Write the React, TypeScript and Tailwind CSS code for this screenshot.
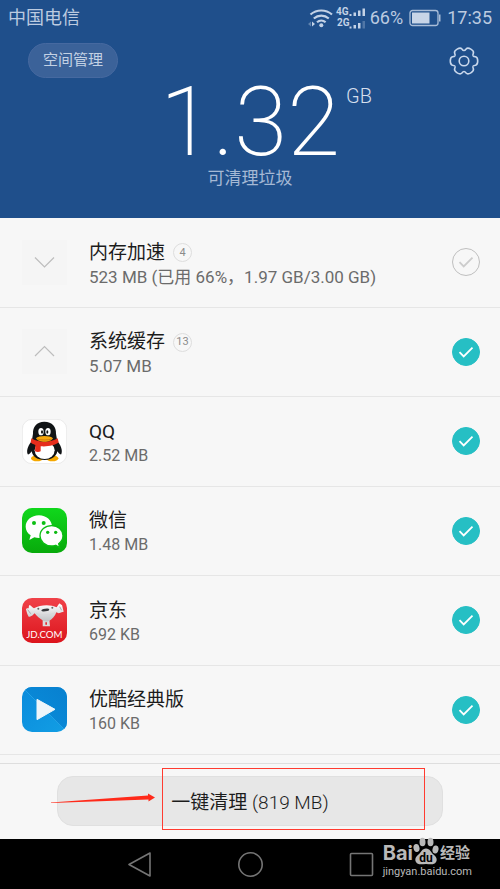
import { useState } from "react";
import type { ReactNode } from "react";

type JunkItem = {
  id: string;
  title: string;
  detail: string;
  icon: ReactNode;
  count?: number;
  checked: boolean;
};

const QQIcon = () => (
  <svg viewBox="0 0 135 135" className="size-full">
    <rect x="1" y="1" width="133" height="133" rx="29" fill="#fff" stroke="#e2e2e2" strokeWidth="2" />
    <ellipse cx="45" cy="118" rx="18" ry="9" fill="#f5a800" />
    <ellipse cx="91" cy="118" rx="18" ry="9" fill="#f5a800" />
    <path d="M32 64C20 76 12 93 17 106c5 1 9-4 12-9 3 17 18 26 39 26s35-10 38-26c3 5 7 10 12 9 5-13-2-28-14-42z" fill="#111416" />
    <ellipse cx="68" cy="94" rx="30" ry="26" fill="#fff" />
    <path d="M67 8C44 8 32 24 33 44l-3 18c18 15 58 15 75 0l-3-18C103 24 91 8 67 8z" fill="#111416" />
    <ellipse cx="57" cy="38" rx="8" ry="11" fill="#fff" />
    <ellipse cx="78" cy="38" rx="8" ry="11" fill="#fff" />
    <ellipse cx="60" cy="39" rx="3" ry="5" fill="#111" />
    <ellipse cx="76" cy="39" rx="3" ry="5" fill="#111" />
    <path d="M28 58c20 14 58 14 79 0l3 12c-10 9-34 14-54 12v15c-5 3-12 3-17 0l1-19c-7-2-12-5-14-8z" fill="#e62d1c" />
    <path d="M42 58c8-9 43-9 51 0-7 14-44 14-51 0z" fill="#f9a90d" />
    <path d="M46 60c12 4 32 4 43 0" stroke="#b96508" strokeWidth="2" fill="none" />
  </svg>
);

const WeChatIcon = () => (
  <svg viewBox="0 0 135 135" className="size-full">
    <defs>
      <linearGradient id="wechat-bg" x1="0" y1="0" x2="0" y2="1">
        <stop offset="0" stopColor="#10d71c" />
        <stop offset="1" stopColor="#08aa0b" />
      </linearGradient>
    </defs>
    <rect width="135" height="135" rx="30" fill="url(#wechat-bg)" />
    <path d="M51 22c-23 0-40 15-40 34 0 11 6 20 15 26l-4 14 15-8c5 1 9 2 14 2 22 0 39-15 39-34S73 22 51 22z" fill="#fff" />
    <circle cx="36" cy="45" r="6" fill="#0cc014" />
    <circle cx="65" cy="45" r="6" fill="#0cc014" />
    <path d="M89 53c-20 0-35 13-35 30s15 31 35 31c4 0 8-1 12-2l12 7-3-12c8-6 13-14 13-24 0-17-15-30-34-30z" fill="#fff" stroke="#0bbd12" strokeWidth="4" />
    <circle cx="77" cy="73" r="5" fill="#0cb912" />
    <circle cx="101" cy="73" r="5" fill="#0cb912" />
  </svg>
);

const JDIcon = () => (
  <svg viewBox="0 0 135 135" className="size-full">
    <defs>
      <linearGradient id="jd-bg" x1="0" y1="0" x2="0" y2="1">
        <stop offset="0" stopColor="#f04249" />
        <stop offset="1" stopColor="#dc141c" />
      </linearGradient>
      <linearGradient id="jd-dog" x1="0" y1="0" x2="0" y2="1">
        <stop offset="0" stopColor="#fff" />
        <stop offset="1" stopColor="#bfc2c4" />
      </linearGradient>
    </defs>
    <rect width="135" height="135" rx="30" fill="url(#jd-bg)" />
    <path d="M62 64h20l2 21H62z" fill="#d9dcdd" />
    <path
      d="M36 31c18-11 50-12 68-3l7-11c4-1 5 4 9 4l5 20c-4 2-8 0-11 4-5 1-8 0-11-2-4 12-12 20-21 25-6 3-13 3-18 0C53 62 44 54 38 46c-4 2-5 8-10 8-3 0-4 4-8 2-4-6-6-14-8-22 2-5 6-3 8-3l1-9c5-2 9 6 15 9z"
      fill="url(#jd-dog)"
    />
    <path d="M17 35l9 12M113 26l6 11" stroke="#a8abad" strokeWidth="3" fill="none" />
    <path d="M42 46c16 7 42 7 58-3" stroke="#d3d6d8" strokeWidth="2" fill="none" />
    <ellipse cx="70" cy="36" rx="12" ry="4" fill="#34383b" transform="rotate(-8 70 36)" />
    <circle cx="49" cy="32" r="3" fill="#666" />
    <circle cx="91" cy="29" r="3" fill="#666" />
    <path d="M70 73h5v7h-5z" fill="#e42c33" />
    <text x="67" y="119" textAnchor="middle" fontSize="29" fontFamily="Lato, sans-serif" fill="#fff">
      JD.COM
    </text>
  </svg>
);

const YoukuIcon = () => (
  <svg viewBox="0 0 135 135" className="size-full">
    <defs>
      <linearGradient id="youku-top" x1="0" y1="1" x2="1" y2="0">
        <stop offset="0" stopColor="#0a8fdd" />
        <stop offset="1" stopColor="#0880cf" />
      </linearGradient>
      <linearGradient id="youku-low" x1="0" y1="0" x2="1" y2="1">
        <stop offset="0" stopColor="#0a8bdc" />
        <stop offset="1" stopColor="#129ee4" />
      </linearGradient>
      <clipPath id="youku-clip">
        <rect width="135" height="135" rx="30" />
      </clipPath>
    </defs>
    <g clipPath="url(#youku-clip)">
      <rect width="135" height="135" fill="url(#youku-low)" />
      <path d="M0 0h135v135z" fill="url(#youku-top)" />
      <path d="M8 8l119 119" stroke="#2fabea" strokeWidth="2" />
    </g>
    <path d="M45 37v61l54-31z" fill="#eef6fa" stroke="#eef6fa" strokeWidth="3" strokeLinejoin="round" />
  </svg>
);

const Chevron = ({ up }: { up?: boolean }) => (
  <svg viewBox="0 0 45 45" className="size-full" fill="none" stroke="#bdbdbd" strokeWidth="1.2">
    <path d={up ? "M13 27l9.5-9.5 9.5 9.5" : "M13 17.5l9.5 9.5 9.5-9.5"} />
  </svg>
);

const lobes = [0, 60, 120, 180, 240, 300];

const GearIcon = () => (
  <svg viewBox="-15 -15 30 30" className="size-[30px]" fill="none" stroke="#c9d8ec" strokeWidth="1.6">
    {lobes.map((angle) => (
      <path
        key={angle}
        transform={`rotate(${angle})`}
        d="M9.1-5.25C9.6-4.4 10.5-4.3 11.5-4.2C12.9-3.9 13.7-1.6 13.7 0C13.7 1.6 12.9 3.9 11.5 4.2C10.5 4.3 9.6 4.4 9.1 5.25"
      />
    ))}
    <circle r="4.8" />
  </svg>
);

const StatusBar = () => (
  <div className="flex h-9 items-center justify-between px-2 text-lg text-[#bccbe0]">
    <span>中国电信</span>
    <div className="flex items-center">
      <svg viewBox="0 0 60 26" className="mr-[3px] h-[26px] w-[60px]" fill="#c3d2e6">
        <g fill="none" stroke="#c3d2e6" strokeWidth="2.2">
          <path d="M3.5 9.5a16.5 16.5 0 0 1 21.5 0" />
          <path d="M6.8 13.5a11.5 11.5 0 0 1 15 0" />
          <path d="M10 17.3a6.5 6.5 0 0 1 8.6 0" />
        </g>
        <circle cx="14.3" cy="20.3" r="2" />
        <path d="M5 16.5v5l3-2.5z" />
        <path d="M4 16.5v5l-3-2.5z" opacity=".4" />
        <text x="29" y="10" fontSize="10" fontWeight="700">4G</text>
        <text x="30" y="21" fontSize="10" fontWeight="700">2G</text>
        <path d="M42.5 9h2v2h-2zM46.5 7.5H49V11h-2.5zM51 5.5h2.5V11H51zM55.5 3.5H58V11h-2.5z" />
        <path d="M42.5 21.5h2v2h-2zM46.5 20H49v3.5h-2.5zM51 18h2.5v5.5H51z" />
        <path d="M55.5 16H58v7.5h-2.5z" opacity=".3" />
      </svg>
      <span>66%</span>
      <svg viewBox="0 0 32 18" className="mx-[6px] h-[18px] w-8">
        <rect x="1" y="1.5" width="28" height="15" rx="2.5" fill="none" stroke="#a9bdd8" strokeWidth="1.3" />
        <rect x="3" y="3.5" width="17.5" height="11" fill="#c8d5e7" />
        <path d="M30 5.5h1.5v7H30z" fill="#a9bdd8" />
      </svg>
      <span>17:35</span>
    </div>
  </div>
);

type RowProps = {
  item: JunkItem;
  onToggle: (id: string) => void;
};

const JunkRow = ({ item, onToggle }: RowProps) => {
  const { id, title, detail, icon, count, checked } = item;
  return (
    <li className="flex items-center border-b border-[#e6e6e6] pr-5 pl-[22px]">
      {count ? (
        <button type="button" aria-label={title} className="size-[45px] bg-[#f5f5f5]">
          {icon}
        </button>
      ) : (
        <div className="size-[45px]">{icon}</div>
      )}
      <div className="ml-[22px] flex-1 pt-[5px]">
        <div className="flex items-center gap-2">
          <label htmlFor={id} className="text-[19px] leading-6 text-[#1c1c1c]">
            {title}
          </label>
          {count && (
            <span className="flex size-[19px] items-center justify-center rounded-full border border-[#dedede] text-[11px] text-[#8b8b8b]">
              {count}
            </span>
          )}
        </div>
        <p className={`${count ? "text-[17px]" : "text-base"} leading-6 text-[#6b6b6b]`}>{detail}</p>
      </div>
      <div className="relative size-7">
        <input
          id={id}
          type="checkbox"
          checked={checked}
          onChange={() => onToggle(id)}
          className="peer block size-7 appearance-none rounded-full border border-[#bfbfbf] checked:border-[#26bfc4] checked:bg-[#26bfc4]"
        />
        <svg
          viewBox="0 0 28 28"
          className="pointer-events-none absolute inset-0 size-7 text-[#cccccc] peer-checked:text-white"
          fill="none"
          stroke="currentColor"
          strokeWidth="1.8"
        >
          <path d="M7.5 14.2l4.2 4.3L20.5 9.7" />
        </svg>
      </div>
    </li>
  );
};

const Watermark = () => (
  <div className="absolute right-7 bottom-[10px] text-[#b9b9b9]">
    <div className="flex items-end">
      <span className="font-[Inter] text-xl leading-6 font-bold">Bai</span>
      <svg viewBox="0 0 26 29" className="h-[29px] w-[26px]" fill="#b9b9b9">
        <ellipse cx="3.5" cy="12" rx="3" ry="4" transform="rotate(-12 3.5 12)" />
        <ellipse cx="9.5" cy="6" rx="3" ry="4.3" />
        <ellipse cx="17.5" cy="6" rx="3" ry="4.3" />
        <ellipse cx="22.5" cy="13.5" rx="3" ry="4" transform="rotate(12 22.5 13.5)" />
        <path d="M13 12.5c-4 0-5 4-7.5 6-3 2.300-4 5-2.500 7.500 2 3.500 6 2 10 2s8 1.500 10-2c1.500-2.500.5-5.200-2.500-7.500-2.500-2-3.500-6-7.500-6z" />
        <text x="13" y="25.5" textAnchor="middle" fontSize="12" fontWeight="700" fill="#000">du</text>
      </svg>
      <span className="ml-px text-[15px] leading-6 font-bold">经验</span>
    </div>
    <p className="text-[11px] leading-[14px]">jingyan.baidu.com</p>
  </div>
);

const initialItems: JunkItem[] = [
  { id: "memory", title: "内存加速", detail: "523 MB (已用 66%，1.97 GB/3.00 GB)", icon: <Chevron />, count: 4, checked: false },
  { id: "cache", title: "系统缓存", detail: "5.07 MB", icon: <Chevron up />, count: 13, checked: true },
  { id: "qq", title: "QQ", detail: "2.52 MB", icon: <QQIcon />, checked: true },
  { id: "wechat", title: "微信", detail: "1.48 MB", icon: <WeChatIcon />, checked: true },
  { id: "jd", title: "京东", detail: "692 KB", icon: <JDIcon />, checked: true },
  { id: "youku", title: "优酷经典版", detail: "160 KB", icon: <YoukuIcon />, checked: true },
];

const App = () => {
  const [items, setItems] = useState(initialItems);

  const toggle = (id: string) =>
    setItems((prev) => prev.map((item) => (item.id === id ? { ...item, checked: !item.checked } : item)));

  return (
    <div className="flex min-h-screen flex-col bg-[#f7f7f7] font-[Roboto,'Noto_Sans_CJK_SC',sans-serif]">
      <header className="bg-[#1f4f8b] pb-7">
        <StatusBar />
        <div className="flex items-center justify-between pt-[7px] pr-[21px] pl-7">
          <button
            type="button"
            className="h-[35px] rounded-full border border-[#4669a0] bg-[#3b6299] px-[14px] text-[15px] text-[#c3d1e4]"
          >
            空间管理
          </button>
          <button type="button" aria-label="设置">
            <GearIcon />
          </button>
        </div>
        <div className="flex justify-center">
          <div className="relative text-8xl leading-[88px] font-extralight text-white">
            1.32
            <span className="absolute top-1 left-full ml-[6px] text-xl leading-7 font-light text-[#d5dfed]">GB</span>
          </div>
        </div>
        <p className="text-center text-[17px] leading-6 text-[#a5b9d5]">可清理垃圾</p>
      </header>

      <ul className="grid flex-1 auto-rows-fr pb-2">
        {items.map((item) => (
          <JunkRow key={item.id} item={item} onToggle={toggle} />
        ))}
      </ul>

      <footer className="relative border-t border-[#dedede] px-[57px] pt-3 pb-[13px]">
        <button
          type="button"
          className="h-[50px] w-full rounded-2xl border border-[#e0e0e0] bg-[#e7e7e7] pt-1 text-[19px] text-[#1c1c1c]"
        >
          一键清理 <span className="font-light">(819 MB)</span>
        </button>
        <div className="pointer-events-none absolute top-1 right-[75px] left-[162px] h-[62px] border border-[#ff3b30]" />
        <svg viewBox="0 0 104 10" className="pointer-events-none absolute top-[29px] left-[51px] h-[10px] w-[104px]" fill="#ff2a1a">
          <path d="M0 9.5L97 2.5V.5l7 4-6.5 4v-2L0 10z" />
        </svg>
      </footer>

      <nav className="relative flex h-[50px] items-center justify-center gap-[86px] bg-black">
        <button type="button" aria-label="返回">
          <svg viewBox="0 0 25 25" className="size-[25px]" fill="none" stroke="#757575" strokeWidth="1.6" strokeLinejoin="round">
            <path d="M23 1v23L2 12.5z" />
          </svg>
        </button>
        <button type="button" aria-label="主屏幕">
          <svg viewBox="0 0 25 25" className="size-[25px]" fill="none" stroke="#757575" strokeWidth="1.6">
            <circle cx="12.5" cy="12.5" r="11.7" />
          </svg>
        </button>
        <button type="button" aria-label="最近任务">
          <svg viewBox="0 0 25 25" className="size-[25px]" fill="none" stroke="#757575" strokeWidth="1.6">
            <rect x="1.5" y="1.5" width="22" height="22" rx="1" />
          </svg>
        </button>
        <Watermark />
      </nav>
    </div>
  );
};

export default App;
